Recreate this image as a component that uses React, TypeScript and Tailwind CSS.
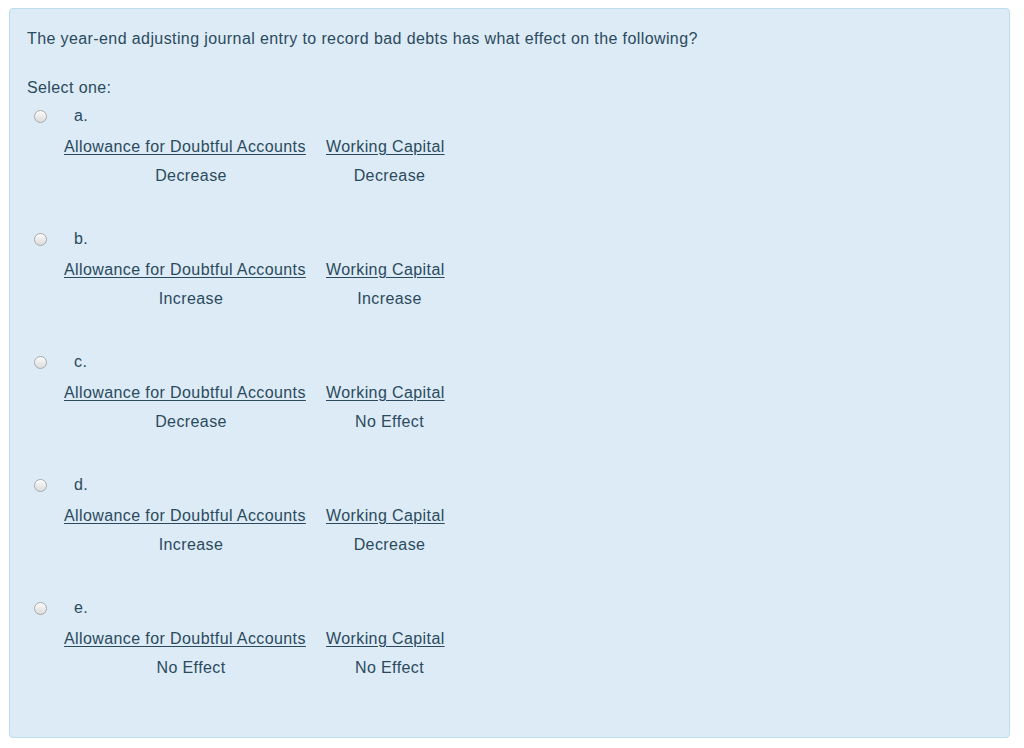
import React from "react";

const options = [
  { l: "a.", v1: "Decrease", v2: "Decrease" },
  { l: "b.", v1: "Increase", v2: "Increase" },
  { l: "c.", v1: "Decrease", v2: "No Effect" },
  { l: "d.", v1: "Increase", v2: "Decrease" },
  { l: "e.", v1: "No Effect", v2: "No Effect" },
];

function Radio() {
  return (
    <span className="inline-block w-[13px] h-[13px] rounded-full border border-[#a9a9a9] bg-[linear-gradient(#fafafa,#dcdcdc)] shadow-[inset_0_1px_1px_rgba(255,255,255,0.8)]" />
  );
}

export default function App() {
  return (
    <div className="w-[1024px] h-[748px] bg-white pt-[8px] pl-[9px] pr-[14px]" style={{ fontFamily: '"Liberation Sans", Arial, sans-serif' }}>
      <div className="h-[730px] rounded-[4px] border border-[#bcdcef] bg-[#dcebf5] text-[#2b4a5e] text-[16px] tracking-[0.4px] leading-[20px] pl-[17px] pt-[20px]">
        <div>The year-end adjusting journal entry to record bad debts has what effect on the following?</div>
        <div className="mt-[29px]">Select one:</div>
        <div className="flex flex-col gap-[43px] mt-[8px]">
          {options.map((o) => (
            <div key={o.l}>
              <div className="flex items-center h-[20px]">
                <span className="ml-[7px] flex items-center"><Radio /></span>
                <span className="ml-[27px]">{o.l}</span>
              </div>
              <div className="ml-[37px] mt-[11px] grid grid-cols-[254px_127px] gap-x-[8px] gap-y-[9px]">
                <div className="underline underline-offset-[2px] whitespace-nowrap">Allowance for Doubtful Accounts</div>
                <div className="underline underline-offset-[2px] whitespace-nowrap">Working Capital</div>
                <div className="text-center">{o.v1}</div>
                <div className="text-center">{o.v2}</div>
              </div>
            </div>
          ))}
        </div>
      </div>
    </div>
  );
}
